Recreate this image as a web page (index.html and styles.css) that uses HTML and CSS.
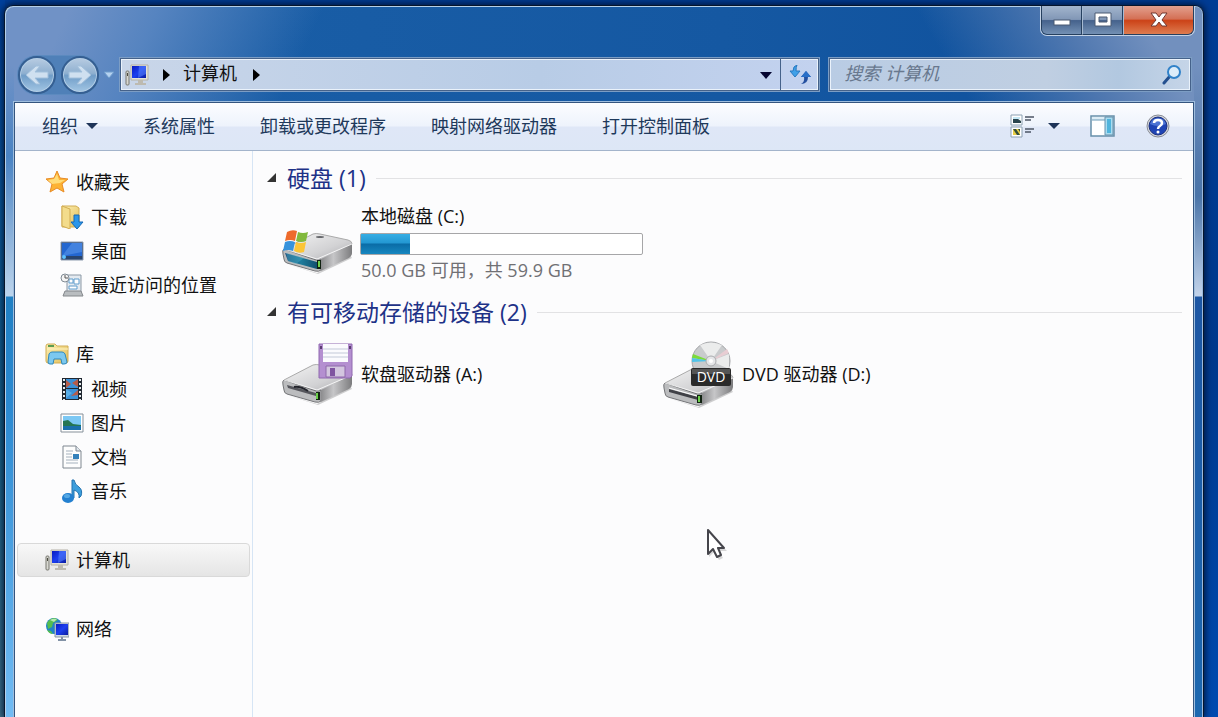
FILE: index.html
```html
<!DOCTYPE html>
<html lang="zh-CN">
	<head>
		<meta charset="utf-8">
		<title>计算机</title>
		<link rel="stylesheet" href="styles.css">
	</head>
	<body>
		<!-- 公用的图标和渐变 -->
		<svg class="defs" width="0" height="0">
			<defs>
				<linearGradient id="blue" x1="0" y1="0" x2="1" y2="1">
					<stop offset="0" stop-color="#0a1cc0"/><stop offset=".5" stop-color="#1c3ff0"/><stop offset="1" stop-color="#0a1ca0"/>
				</linearGradient>
				<linearGradient id="metal" x1="0" y1="0" x2="1" y2="1">
					<stop offset="0" stop-color="#f4f4f4"/><stop offset=".6" stop-color="#d2d2d4"/><stop offset="1" stop-color="#a8a8ac"/>
				</linearGradient>
				<linearGradient id="side" x1="0" y1="0" x2="1" y2="0">
					<stop offset="0" stop-color="#8c8c8e"/><stop offset=".4" stop-color="#c6c6c8"/><stop offset="1" stop-color="#7c7c7e"/>
				</linearGradient>
				<linearGradient id="folder" x1="0" y1="0" x2="1" y2="1">
					<stop offset="0" stop-color="#fdf0b4"/><stop offset="1" stop-color="#e2bd58"/>
				</linearGradient>
				<linearGradient id="glass" x1="0" y1="0" x2="1" y2="0">
					<stop offset="0" stop-color="#1a4a78"/><stop offset=".5" stop-color="#1f7c9c"/><stop offset="1" stop-color="#12506e"/>
				</linearGradient>
				<symbol id="computer" viewBox="0 0 24 24">
					<rect x="1" y="8" width="3" height="14" rx="1" fill="#d8d8d2" stroke="#77776f"/>
					<rect x="2" y="10" width="1" height="3" fill="#4a4a40"/>
					<path d="M6 2h17v15H6z" fill="#e6e3d8" stroke="#b4b1a6"/>
					<path d="M7 3h14v12H7z" fill="url(#blue)"/>
					<path d="M14 3h7v8l-8 4z" fill="#5f8bff" opacity=".5"/>
					<path d="M13 17h5v3h3v2H10v-2h3z" fill="#bdbab0"/>
				</symbol>
				<symbol id="drive" viewBox="0 0 72 44">
					<path d="M5 34l30 9 33-18 2 3-34 16z" fill="#000" opacity=".18"/>
					<path d="M2 19L31 4q3-1 7 0l28 6q4 1 4 4L40 30q-2 1-5 0L4 22z" fill="url(#metal)" stroke="#aaa"/>
					<path d="M2 19q-2 1-1 5l1 5q0 3 3 4l28 8q4 1 6-1V29q-2 2-5 1z" fill="#bbbcbe" stroke="#747578"/>
					<path d="M39 29l31-15v9q0 3-3 5L39 41z" fill="url(#side)"/>
					<path d="M2 19l33 10 35-15" fill="none" stroke="#fff" opacity=".8"/>
				</symbol>
			</defs>
		</svg>

		<div class="window">
			<!-- 标题栏 -->
			<div class="titlebar">
				<div class="controls">
					<button class="control" aria-label="最小化">
						<svg width="18" height="14"><rect x="1" y="7" width="16" height="5" fill="#fff" stroke="#4a5a72"/></svg>
					</button>
					<button class="control" aria-label="最大化">
						<svg width="18" height="16"><path d="M1 1h16v13H1zM5 5v5h8V5z" fill="#fff" fill-rule="evenodd" stroke="#4a5a72"/></svg>
					</button>
					<button class="control close" aria-label="关闭">
						<svg width="18" height="16"><path d="M1 1h5l3 4 3-4h5l-5 7 5 6h-5l-3-4-3 4H1l5-6z" fill="#fff" stroke="#70372f"/></svg>
					</button>
				</div>
			</div>

			<!-- 导航和地址栏 -->
			<div class="nav">
				<div class="travel">
					<button class="round" aria-label="后退">
						<svg width="26" height="22" viewBox="0 0 26 22"><path d="M2 11L12 2h4l-5 6h13v6H11l5 6h-4z" fill="#cfe0f0" stroke="#a2c0dc"/></svg>
					</button>
					<button class="round" aria-label="前进">
						<svg width="26" height="22" viewBox="0 0 26 22"><path d="M24 11L14 2h-4l5 6H2v6h13l-5 6h4z" fill="#cfe0f0" stroke="#a2c0dc"/></svg>
					</button>
				</div>
				<button class="recent" aria-label="最近的页面">
					<svg width="12" height="8"><path d="M1 1h10L6 7z" fill="#b5d2f0" stroke="#6e9ccc"/></svg>
				</button>
				<div class="address">
					<svg class="icon" width="24" height="24"><use href="#computer"/></svg>
					<svg width="8" height="12"><path d="M1 0v12l7-6z"/></svg>
					<a class="crumb" href="#">计算机</a>
					<svg width="8" height="12"><path d="M1 0v12l7-6z"/></svg>
					<button class="history" aria-label="以前的位置">
						<svg width="12" height="8"><path d="M0 1h12L6 8z" fill="#050530"/></svg>
					</button>
					<button class="refresh" aria-label="刷新">
						<svg width="22" height="20" viewBox="0 0 22 20">
							<path d="M8 0Q4 1 4 6H1l5 6 5-6H7Q7 2 8 0z" fill="#3fa0e8" stroke="#2878c0"/>
							<path d="M12 19q4-2 3-7h-3l5-6 5 6h-3q0 7-7 7z" fill="#2450a0"/>
							<path d="M12 12l5-6 5 6z" fill="#2a70c8"/>
						</svg>
					</button>
				</div>
				<label class="search">
					<input class="search-input" type="text" aria-label="搜索" placeholder="搜索 计算机">
					<svg width="20" height="20" viewBox="0 0 20 20">
						<path d="M8 11l-6 7" stroke="#24508f" stroke-width="3" stroke-linecap="round"/>
						<circle cx="12" cy="7" r="6" fill="#dcecf9" stroke="#3182c9" stroke-width="2"/>
					</svg>
				</label>
			</div>

			<div class="client">
				<!-- 工具栏 -->
				<div class="toolbar">
					<button class="tool">组织<svg width="12" height="8"><path d="M0 1h12L6 7z" fill="#1e3458"/></svg></button>
					<button class="tool">系统属性</button>
					<button class="tool">卸载或更改程序</button>
					<button class="tool">映射网络驱动器</button>
					<button class="tool">打开控制面板</button>
					<div class="tool-right">
						<button class="tool views" aria-label="更改视图">
							<svg width="26" height="24" viewBox="0 0 26 24">
								<path d="M1 1h11v10H1zM1 13h11v10H1z" fill="#fff" stroke="#8ba0b2"/>
								<path d="M3 5h5l3 2v2H3z" fill="#29454e"/><path d="M3 3h7v2H3z" fill="#c6e9f6"/>
								<path d="M3 15h7v6H3z" fill="#e9cf48"/><path d="M3 15h3l4 6H7zM8 15h2v3z" fill="#34503a"/>
								<path d="M15 3h9M15 6h6M15 15h9M15 18h6" stroke="#4c5665" stroke-width="1.5"/>
							</svg>
							<svg width="12" height="8"><path d="M0 1h12L6 7z" fill="#1e3458"/></svg>
						</button>
						<button class="tool" aria-label="显示预览窗格">
							<svg width="26" height="22" viewBox="0 0 26 22">
								<path d="M1 1h23v20H1z" fill="#fff" stroke="#6790ab" stroke-width="1.5"/>
								<path d="M2 2h13v3H2z" fill="#dcecf5"/><path d="M2 5h13" stroke="#6d9cb8"/>
								<path d="M15 2h8v18h-8z" fill="#a9dcf0" stroke="#6790ab"/><path d="M17 4h4v14h-4z" fill="#50b4dc"/>
							</svg>
						</button>
						<button class="tool help" aria-label="获取帮助">
							<svg width="24" height="24" viewBox="0 0 24 24">
								<circle cx="12" cy="12" r="11" fill="#d9dbe0" stroke="#878b94"/>
								<circle cx="12" cy="12" r="9" fill="#1f44b4" stroke="#1b2f7c"/>
								<path d="M4 10q2-6 8-6t8 6q-8 4-16 0z" fill="#6c94ea" opacity=".6"/>
								<path d="M8 9q0-3 4-3t4 3q0 2-2 3t-2 3" fill="none" stroke="#fff" stroke-width="2.5"/>
								<circle cx="12" cy="18" r="1.5" fill="#fff"/>
							</svg>
						</button>
					</div>
				</div>

				<div class="content">
					<!-- 左侧导航窗格 -->
					<nav class="sidebar">
						<div class="group">
							<a class="node" href="#">
								<svg width="24" height="24" viewBox="0 0 24 24"><path d="M12 1l3 7 8 1-6 5 2 8-7-4-7 4 2-8-6-5 8-1z" fill="#fdb334" stroke="#e88b26" stroke-linejoin="round"/><path d="M12 4l2 6h6l-5 3-8 1-4-4 6-1z" fill="#ffdc78"/></svg>
								收藏夹
							</a>
							<a class="node child" href="#">
								<svg width="24" height="24" viewBox="0 0 24 24"><path d="M2 1h14l3 2v19H2z" fill="url(#folder)" stroke="#d2ad52"/><path d="M2 1l8 3v20l-8-3z" fill="#f3dc8c" stroke="#d2ad52"/><path d="M14 10h5v7h4l-6 7-6-7h3z" fill="#2b96ea" stroke="#1668b4"/></svg>
								下载
							</a>
							<a class="node child" href="#">
								<svg width="24" height="24" viewBox="0 0 24 24"><path d="M1 3h22v18H1z" fill="#29456e" stroke="#8e9cb0"/><path d="M2 4h20v13H2z" fill="#2467d0"/><path d="M12 4h10v9L2 17z" fill="#5894ea" opacity=".6"/><circle cx="4" cy="18" r="2" fill="#5dc2ff"/></svg>
								桌面
							</a>
							<a class="node child" href="#">
								<svg width="24" height="24" viewBox="0 0 24 24"><path d="M7 2h14v17H7z" fill="#e4eaf0" stroke="#8b98a5"/><path d="M9 6h4v4H9zM14 6h5v5h-5zM9 13h8v3H9z" fill="#fff" stroke="#5f9ccc"/><path d="M5 18h16l2 5H3z" fill="#b9bdc0" stroke="#84888c"/><circle cx="5" cy="5" r="4" fill="#f4f4f4" stroke="#808a94"/><path d="M5 2v3h3" fill="none" stroke="#555"/></svg>
								最近访问的位置
							</a>
						</div>
						<div class="group">
							<a class="node" href="#">
								<svg width="24" height="24" viewBox="0 0 24 24"><path d="M1 4q0-2 2-2h7l2 2h11v15q0 2-2 2H3q-2 0-2-2z" fill="url(#folder)" stroke="#d2ad52"/><path d="M3 4h6" stroke="#5c9d52" stroke-width="2"/><path d="M2 7h21" stroke="#fff4c4"/><path d="M3 20l1-8q1-2 3-2h10q2 0 3 2l2 8q0 2-3 2h-2l-1-5H9l-1 5H5q-2 0-2-2z" fill="#7cc8ef" stroke="#2f88bc"/></svg>
								库
							</a>
							<a class="node child" href="#">
								<svg width="24" height="24" viewBox="0 0 24 24"><path d="M2 1h20v22H2z" fill="#202831"/><path d="M6 2h12v9H6zM6 12h12v10H6z" fill="#3a91d8"/><path d="M6 3l5 4-5 4zM18 2v8l-6-4zM18 13v5l-7 1z" fill="#b75c49"/><path d="M6 12l6 4-6 5z" fill="#58aee8"/><path d="M4 2v21M20 2v21" stroke="#e8edf0" stroke-width="2" stroke-dasharray="2 2"/></svg>
								视频
							</a>
							<a class="node child" href="#">
								<svg width="24" height="24" viewBox="0 0 24 24"><path d="M1 3h22v18H1z" fill="#fff" stroke="#858f99"/><path d="M3 5h18v14H3z" fill="#7cc8f4"/><path d="M3 10l5-1 5 4 8 1v2H3z" fill="#257552"/><path d="M3 15h18v4H3z" fill="#1a6faa"/></svg>
								图片
							</a>
							<a class="node child" href="#">
								<svg width="24" height="24" viewBox="0 0 24 24"><path d="M3 1h13l5 5v17H3z" fill="#fdfdfd" stroke="#7e8790"/><path d="M16 1v5h5" fill="#e2e8ee" stroke="#7e8790"/><path d="M6 6h7M6 9h6M6 12h6M6 15h12M6 18h12" stroke="#a5b1bd"/><path d="M13 9h6v5h-6z" fill="#3481bb"/></svg>
								文档
							</a>
							<a class="node child" href="#">
								<svg width="24" height="24" viewBox="0 0 24 24"><path d="M12 1h2q1 5 5 7 4 3 2 9l-2 2q1-6-5-8v8h-2z" fill="#3c9edc" stroke="#2273b0"/><ellipse cx="8" cy="19" rx="6" ry="5" fill="#2380d0"/><ellipse cx="7" cy="17" rx="3" ry="2" fill="#55a8e4"/></svg>
								音乐
							</a>
						</div>
						<div class="group">
							<a class="node current" href="#">
								<svg width="24" height="24"><use href="#computer"/></svg>
								计算机
							</a>
						</div>
						<div class="group">
							<a class="node" href="#">
								<svg width="24" height="24" viewBox="0 0 24 24"><circle cx="9" cy="9" r="8" fill="#2082c9"/><path d="M2 6q3-5 8-5l3 2-5 3-1 4-4 2zM2 13l4 1 2 3q-4 0-6-4z" fill="#55be4e"/><path d="M5 3q3-2 7-1l-3 3z" fill="#e0f8d8" opacity=".7"/><path d="M10 6h14v14H10z" fill="#cfd9e4" stroke="#8996a4"/><path d="M11 7h12v11H11z" fill="url(#blue)"/><path d="M16 20h2v2h3v2h-8v-2h3z" fill="#8292a6"/></svg>
								网络
							</a>
						</div>
					</nav>

					<!-- 驱动器列表 -->
					<main class="main">
						<section class="section">
							<h2 class="heading">
								<svg width="10" height="10"><path d="M9 0v9H0z" fill="#333"/></svg>
								硬盘 (1)
							</h2>
							<div class="tiles">
								<a class="tile" href="#">
									<svg width="72" height="70" viewBox="0 0 72 70">
										<use href="#drive" y="22" width="72" height="44"/>
										<path d="M3 45l32 9v7L6 53z" fill="url(#glass)"/><path d="M4 45l18 5-8 6-8-3z" fill="#4db4cc" opacity=".4"/>
										<path d="M35 52h4v9h-4z" fill="#102010"/><path d="M36 53h2v6h-2z" fill="#6dd04c"/>
										<ellipse cx="38" cy="29" rx="4" ry="1" fill="#66686c"/>
										<path d="M5 24q5-3 10-1l-2 10q-5-2-10 0z" fill="#ee6a2c"/>
										<path d="M16 24q5 2 10 0l-2 9q-5 2-10 0z" fill="#81b93c"/>
										<path d="M3 34q5-2 10 0l-2 9q-5-2-10 0z" fill="#3793dc"/>
										<path d="M14 34q5 2 10 0l-2 10q-5 2-10-1z" fill="#fbc536"/>
									</svg>
									<span class="info">
										<span class="name">本地磁盘 (C:)</span>
										<span class="bar"><span class="used" style="width: 17.3%"></span></span>
										<span class="free">50.0 GB 可用，共 59.9 GB</span>
									</span>
								</a>
							</div>
						</section>
						<section class="section">
							<h2 class="heading">
								<svg width="10" height="10"><path d="M9 0v9H0z" fill="#333"/></svg>
								有可移动存储的设备 (2)
							</h2>
							<div class="tiles">
								<a class="tile" href="#">
									<svg width="72" height="70" viewBox="0 0 72 70">
										<use href="#drive" y="22" width="72" height="44"/>
										<path d="M5 46l29 8v3L6 49z" fill="#55565c"/><path d="M12 48q6-1 14 4" fill="none" stroke="#24252c" stroke-width="2"/>
										<path d="M34 53h4v8h-4z" fill="#122412"/><path d="M34 54h2v6h-2z" fill="#6dd04c"/>
										<path d="M37 5h33v32l-2 2H37z" fill="#b48fd0" stroke="#9068b0"/>
										<path d="M41 5h25v18H41z" fill="#fbfbfe"/><path d="M41 10h25M41 14h25M41 18h25" stroke="#c3c9d8"/>
										<path d="M44 27h19v11H44z" fill="#d3c6df" stroke="#8e68aa"/><path d="M48 29h5v8h-5z" fill="#7f54a0"/>
										<path d="M38 7h2v3h-2zM67 7h2v3h-2z" fill="#5b3d72"/>
									</svg>
									<span class="info"><span class="name">软盘驱动器 (A:)</span></span>
								</a>
								<a class="tile" href="#">
									<svg width="72" height="70" viewBox="0 0 72 70">
										<use href="#drive" y="25" width="72" height="44"/>
										<path d="M6 50l29 8v3L6 53z" fill="#404147"/><path d="M6 49l28 8" stroke="#fff"/>
										<path d="M34 56h5v8h-5z" fill="#122412"/><path d="M35 57h2v6h-2z" fill="#6dd04c"/>
										<circle cx="48" cy="22" r="19" fill="#c9cbcd" stroke="#a3a5a8"/>
										<path d="M48 22L37 6q11-5 22 0zM48 22l18 8V15z" fill="#f4f4f4" opacity=".8"/>
										<path d="M48 22L30 15l-1 4z" fill="#7bdc3a"/><path d="M48 22l-19-3v4z" fill="#52c3e8"/><path d="M48 22l18-8-2-4z" fill="#e8cdd3"/>
										<circle cx="48" cy="22" r="5" fill="#e5e6e8" stroke="#a9abae"/><circle cx="48" cy="22" r="2" fill="#fff"/>
										<rect x="28" y="29" width="40" height="18" rx="2" fill="#2a2a2a"/><path d="M29 30h38v5H29z" fill="#555"/>
										<text class="disc-text" x="48" y="43" text-anchor="middle">DVD</text>
									</svg>
									<span class="info"><span class="name">DVD 驱动器 (D:)</span></span>
								</a>
							</div>
						</section>
					</main>
				</div>
			</div>
		</div>

		<!-- 鼠标指针 -->
		<svg class="cursor" width="24" height="32" viewBox="0 0 24 32">
			<path d="M3 4v24l5-5 5 8 4-2-4-7h8z" fill="#000" opacity=".15"/>
			<path d="M2 1v24l5-5 4 8 4-2-3-7h6z" fill="#fff" stroke="#45454b" stroke-width="2" stroke-linejoin="round"/>
		</svg>
	</body>
</html>
```
FILE: styles.css
```css
*{
	margin: 0;
	padding: 0;
	box-sizing: border-box;
}

body{
	display: flex;
	min-height: 100vh;
	padding: 5px 14px 0 4px;
	font: 18px/28px "Open Sans", "Noto Sans CJK SC", sans-serif;
	color: #111;
	background:
		linear-gradient(#00409c, #0a5a9a 30%, #176488 60%, #3f7188) left / 5px 100% no-repeat,
		linear-gradient(#003c94, #00388c 50%, #004ab0);
}

button{
	border: 0;
	background: none;
	font: inherit;
	color: inherit;
}

a{
	color: inherit;
	text-decoration: none;
}

svg{
	display: block;
	flex: none;
}

.defs{
	position: absolute;
}

/* 窗口边框 */
.window{
	flex: 1;
	display: flex;
	flex-direction: column;
	min-width: 0;
	padding: 0 8px;
	border: 1px solid #06152c;
	border-bottom: 0;
	border-radius: 9px 9px 0 0;
	box-shadow: inset 1px 1px #b4cfe8, inset -1px 0 #9cb9dc, 0 0 7px 1px #001434;
	background:
		linear-gradient(rgba(74, 132, 196, 0) 60px, #4a84c4 150px, #bcd4ec 290px, #2080c4 291px, #2b8ad2 400px, #72bcf4) left / 9px 100% no-repeat,
		linear-gradient(rgba(74, 116, 168, 0) 60px, #4a74a8 190px, #c2d3ea 290px, #1c56a4 291px, #1c68b0) right / 9px 100% no-repeat,
		linear-gradient(115deg, #7092c6 60px, #5684c0 140px, rgba(29, 95, 164, 0) 290px),
		linear-gradient(240deg, #7290be 60px, #5078b0 130px, rgba(13, 79, 156, 0) 250px),
		linear-gradient(90deg, #1b60a8, #1558a2 60%, #0d4f9c);
}

.titlebar{
	display: flex;
	justify-content: flex-end;
	height: 51px;
}

.controls{
	display: flex;
	height: 30px;
	border: 1px solid #c4d3e6;
	border-top: 0;
	border-radius: 0 0 7px 7px;
	overflow: hidden;
}

.control{
	display: flex;
	align-items: center;
	justify-content: center;
	width: 41px;
	border: 1px solid #26405f;
	border-left-color: #a6bad2;
	border-top: 0;
	background: linear-gradient(#a3b5cd, #8197b6 48%, #45628c 52%, #7390b4);
}

.control:first-child{
	border-left-color: #26405f;
	border-radius: 0 0 0 6px;
}

.close{
	width: 71px;
	border-radius: 0 0 6px;
	background: linear-gradient(#e3a08e, #d47055 46%, #cc4318 52%, #de7c50);
}

/* 导航栏 */
.nav{
	display: flex;
	align-items: center;
	height: 35px;
	margin-bottom: 9px;
	padding: 0 3px 0 5px;
}

.travel{
	display: flex;
	gap: 5px;
	border-radius: 19px;
	background: #4f80b8;
	box-shadow: 0 0 0 1px #5c8abf;
}

.round{
	display: flex;
	align-items: center;
	justify-content: center;
	width: 38px;
	height: 38px;
	border: 2px solid #355f92;
	border-radius: 50%;
	background: linear-gradient(#b8cce2, #8fb0d0 45%, #709dc8 52%, #a3c6e4);
	box-shadow: inset 0 0 0 1px #b5cfe6;
}

.recent{
	width: 20px;
	padding: 0 4px;
}

.address, .search{
	display: flex;
	align-items: center;
	height: 35px;
	border: 1px solid #7c9dc4;
	box-shadow: inset 0 0 0 1px #45628a, inset 0 0 0 2px #eaf2fb;
	background: linear-gradient(90deg, #c9d6e9, #b8cce6 60%, #c3d2ef);
}

.address{
	flex: 700 1 700px;
	gap: 13px;
	padding: 1px 1px 1px 5px;
}

.crumb{
	margin-right: 2px;
}

.crumb, .search-input{
	padding-bottom: 3px;
}

.history{
	margin-left: auto;
}

.refresh{
	display: flex;
	align-items: center;
	justify-content: center;
	align-self: stretch;
	width: 38px;
	border-left: 1px solid #45628a;
	margin-left: -5px;
}

.search{
	flex: 363 1 363px;
	min-width: 0;
	margin-left: 8px;
	padding: 0 9px 0 15px;
	background: linear-gradient(90deg, #b9cce4, #c0cfe2 60%, #b2c8e0 80%, #c6d5e8);
}

.search-input{
	flex: 1;
	min-width: 0;
	border: 0;
	outline: 0;
	background: none;
	font: inherit;
}

.search-input::placeholder{
	color: #68788e;
	font-style: italic;
}

/* 客户区 */
.client{
	flex: 1;
	display: flex;
	flex-direction: column;
	border: 1px solid #9fbede;
	border-bottom: 0;
	box-shadow: inset 0 0 0 1px #34557f;
	padding: 1px 1px 0;
}

.toolbar{
	display: flex;
	align-items: center;
	gap: 45px;
	height: 48px;
	padding: 0 23px 2px 27px;
	border-bottom: 1px solid #a3b4cb;
	background: linear-gradient(#fcfdff, #eef3fc 48%, #dfe7f7 52%, #dde7f6);
	color: #1e395b;
	white-space: nowrap;
}

.tool{
	display: flex;
	align-items: center;
	gap: 8px;
}

.tool-right{
	display: flex;
	align-items: center;
	gap: 30px;
	margin-left: auto;
}

.views{
	gap: 12px;
}

.content{
	flex: 1;
	display: flex;
	background: #fcfcfd;
}

/* 左侧列表 */
.sidebar{
	width: 238px;
	flex: none;
	padding: 14px 2px 0;
	border-right: 1px solid #d6e5f5;
}

.group{
	margin-bottom: 35px;
}

.node{
	display: flex;
	align-items: center;
	gap: 7px;
	height: 34px;
	margin-bottom: 1px;
	padding-left: 28px;
}

.child{
	margin-bottom: 0;
	padding-left: 43px;
}

.current{
	padding-left: 27px;
	border: 1px solid #d9d9d9;
	border-radius: 4px;
	background: linear-gradient(#f8f8f8, #e5e5e5);
}

/* 右侧内容 */
.main{
	flex: 1;
	min-width: 0;
	padding: 11px 11px 0 14px;
}

.section{
	margin-bottom: 12px;
}

.heading{
	display: flex;
	align-items: center;
	gap: 10px;
	height: 32px;
	margin-bottom: 8px;
	font-size: 23px;
	font-weight: normal;
	color: #1e3287;
}

.heading::after{
	content: "";
	flex: 1;
	height: 1px;
	background: #e2e2e4;
}

.tiles{
	display: grid;
	grid-template-columns: repeat(auto-fill, 381px);
	padding-left: 15px;
}

.tile{
	display: flex;
	align-items: center;
	gap: 6px;
	min-height: 76px;
}

.info{
	display: flex;
	flex-direction: column;
}

.name, .free{
	padding-left: 1px;
}

.bar{
	width: 283px;
	height: 22px;
	margin: 3px 0 1px;
	border: 1px solid #a6a6a8;
	border-radius: 2px;
	background: #fff;
}

.used{
	display: block;
	height: 100%;
	background: linear-gradient(#36aee4, #2397d2 45%, #0a6ca6 50%, #1787c0);
}

.free{
	color: #707074;
}

.disc-text{
	font-size: 14px;
	fill: #fff;
}

.cursor{
	position: absolute;
	left: 706px;
	top: 529px;
}
```
